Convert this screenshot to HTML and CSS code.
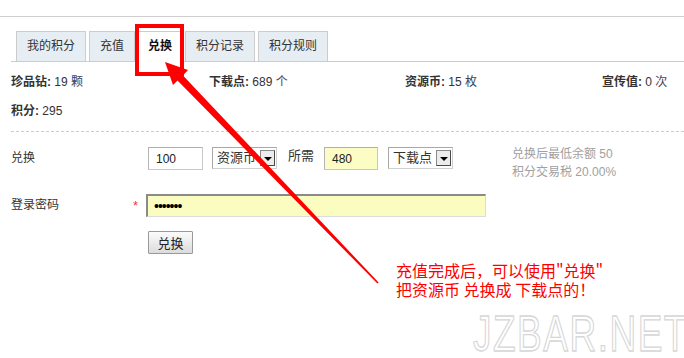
FILE: index.html
```html
<!DOCTYPE html>
<html lang="zh-CN">
<head>
<meta charset="utf-8">
<title>兑换</title>
<link rel="stylesheet" href="styles.css">
</head>
<body>
<div class="topbar"></div>
<div class="page">
  <ul class="tabs">
    <li class="tab">我的积分</li>
    <li class="tab">充值</li>
    <li class="tab active">兑换</li>
    <li class="tab">积分记录</li>
    <li class="tab">积分规则</li>
  </ul>
  <div class="stats">
    <div class="stat"><b>珍品钻:</b> 19 <span class="unit">颗</span></div>
    <div class="stat"><b>下载点:</b> 689 <span class="unit">个</span></div>
    <div class="stat"><b>资源币:</b> 15 <span class="unit">枚</span></div>
    <div class="stat"><b>宣传值:</b> 0 <span class="unit">次</span></div>
    <div class="stat"><b>积分:</b> 295</div>
  </div>
  <form class="form">
    <div class="row row-exchange">
      <label class="label">兑换</label>
      <div class="fields">
        <input class="text amount" type="text" value="100">
        <div class="select"><span class="select-text">资源币</span><span class="select-btn"></span></div>
        <span class="need">所需</span>
        <input class="text amount yellow" type="text" value="480">
        <div class="select"><span class="select-text">下载点</span><span class="select-btn"></span></div>
        <div class="help">
          <div>兑换后最低余额 50</div>
          <div>积分交易税 20.00%</div>
        </div>
      </div>
    </div>
    <div class="row row-pass">
      <label class="label">登录密码<span class="req">*</span></label>
      <input class="password" type="password" value="1234567">
    </div>
    <div class="row row-btn">
      <button class="btn" type="button">兑换</button>
    </div>
  </form>
</div>

<svg class="annot" width="684" height="358" viewBox="0 0 684 358">
  <rect x="137" y="26" width="45" height="48" fill="none" stroke="#ff0000" stroke-width="4"/>
  <polygon fill="#ff0000" points="165,62 188,70 183,75.5 378.6,282.4 377.4,283.6 177.5,80.5 173,85"/>
</svg>
<div class="note">
  <div class="note-line">充值完成后，可以使用"兑换"</div>
  <div class="note-line">把资源币 兑换成 下载点的！</div>
</div>
<div class="watermark">JZBAR.NET</div>
</body>
</html>
```

FILE: styles.css
```css
html, body {
  margin: 0;
  padding: 0;
  background: #fff;
}
body {
  width: 684px;
  height: 358px;
  overflow: hidden;
  position: relative;
  font: 12px "Liberation Sans", "Noto Sans CJK SC", sans-serif;
  color: #333;
}
.topbar {
  height: 16px;
  border-bottom: 1px solid #cfcfcf;
}
.page {
  padding-left: 11px;
}
.tabs {
  list-style: none;
  margin: 14px 0 0;
  padding: 0 0 0 5px;
  display: flex;
  gap: 3px;
  border-bottom: 1px solid #cccccc;
  height: 30px;
}
.tab {
  height: 29px;
  line-height: 29px;
  padding: 0 10px;
  border: 1px solid #cccccc;
  border-bottom: none;
  background: #e6edf3;
  color: #333;
}
.tab.active {
  background: #fff;
  font-weight: bold;
  height: 30px;
  color: #111;
  padding: 0 9px;
}
.stats {
  display: grid;
  grid-template-columns: 198px 196px 197px 1fr;
  padding: 6px 0 5px;
  border-bottom: 1px dashed #cccccc;
  line-height: 29px;
}
.stat b {
  font-weight: bold;
  color: #333;
}
.unit {
  color: #445;
}
.form {
  margin: 0;
}
.row {
  display: flex;
  align-items: flex-start;
}
.row-exchange {
  margin-top: 15px;
}
.row-pass {
  margin-top: 13px;
}
.row-btn {
  margin-top: 14px;
  padding-left: 137px;
}
.label {
  width: 135px;
  flex: none;
  display: flex;
  justify-content: space-between;
  line-height: 23px;
  box-sizing: border-box;
  padding-right: 8px;
}
.req {
  color: #ff3333;
  font-size: 13px;
}
.fields {
  display: flex;
  align-items: flex-start;
  padding-left: 2px;
}
.text {
  box-sizing: border-box;
  height: 23px;
  margin: 0;
  padding: 0 7px;
  font: 12px "Liberation Sans", sans-serif;
  color: #222;
  border: 1px solid #c8c8c8;
  border-top-color: #b0b0b0;
  border-left-color: #b5b5b5;
  background: #fff;
  outline: none;
}
.amount {
  width: 55px;
}
.yellow {
  width: 54px;
  background: #fbfdc4;
}
.select {
  box-sizing: border-box;
  width: 65px;
  height: 22px;
  margin-left: 9px;
  border: 1px solid #a8a8a8;
  border-right-color: #d0d0d0;
  border-bottom-color: #d0d0d0;
  display: flex;
  align-items: center;
  justify-content: space-between;
  padding: 0 1px 0 4px;
  background: #fff;
}
.select + .need {
  margin-left: 11px;
}
.yellow + .select {
  margin-left: 10px;
}
.select-text {
  font-size: 13px;
  color: #333;
  line-height: 18px;
}
.select-btn {
  box-sizing: border-box;
  width: 15px;
  height: 16px;
  border: 1px solid #4a4a4a;
  border-top-color: #8a8a8a;
  border-left-color: #8a8a8a;
  background: #ececec;
  position: relative;
}
.select-btn::after {
  content: "";
  position: absolute;
  left: 3px;
  top: 6px;
  border-left: 4px solid transparent;
  border-right: 4px solid transparent;
  border-top: 4px solid #000;
}
.need {
  line-height: 17px;
  margin-right: 10px;
  font-size: 13px;
}
.help {
  margin: -2px 0 0 59px;
  line-height: 18px;
  color: #a0a0a0;
}
.password {
  box-sizing: border-box;
  width: 340px;
  height: 23px;
  margin: 0;
  padding: 0 6px;
  border: 1px solid #dcdcdc;
  border-top: 2px solid #8a8a8a;
  border-left: 2px solid #8a8a8a;
  background: #fbfdc0;
  font: 14px "Liberation Sans", sans-serif;
  letter-spacing: -1px;
  color: #000;
  outline: none;
}
.btn {
  box-sizing: border-box;
  width: 45px;
  height: 23px;
  margin: 0;
  padding: 0;
  border: 1px solid #999;
  border-radius: 1px;
  background: linear-gradient(#fbfbfb, #dcdcdc);
  font: 13px "Noto Sans CJK SC", sans-serif;
  color: #222;
}
.annot {
  position: absolute;
  left: 0;
  top: 0;
  pointer-events: none;
}
.note {
  position: absolute;
  left: 396px;
  top: 261px;
  font: 16px/19px "Noto Sans CJK SC", sans-serif;
  color: #ff0000;
}
.watermark {
  position: absolute;
  left: 473px;
  top: 309px;
  font: 37px/37px "Liberation Sans", sans-serif;
  letter-spacing: 1.5px;
  color: #fff;
  -webkit-text-stroke: 1px #d6d6d6;
  transform: scaleY(1.35);
  transform-origin: left top;
  white-space: nowrap;
}
```
